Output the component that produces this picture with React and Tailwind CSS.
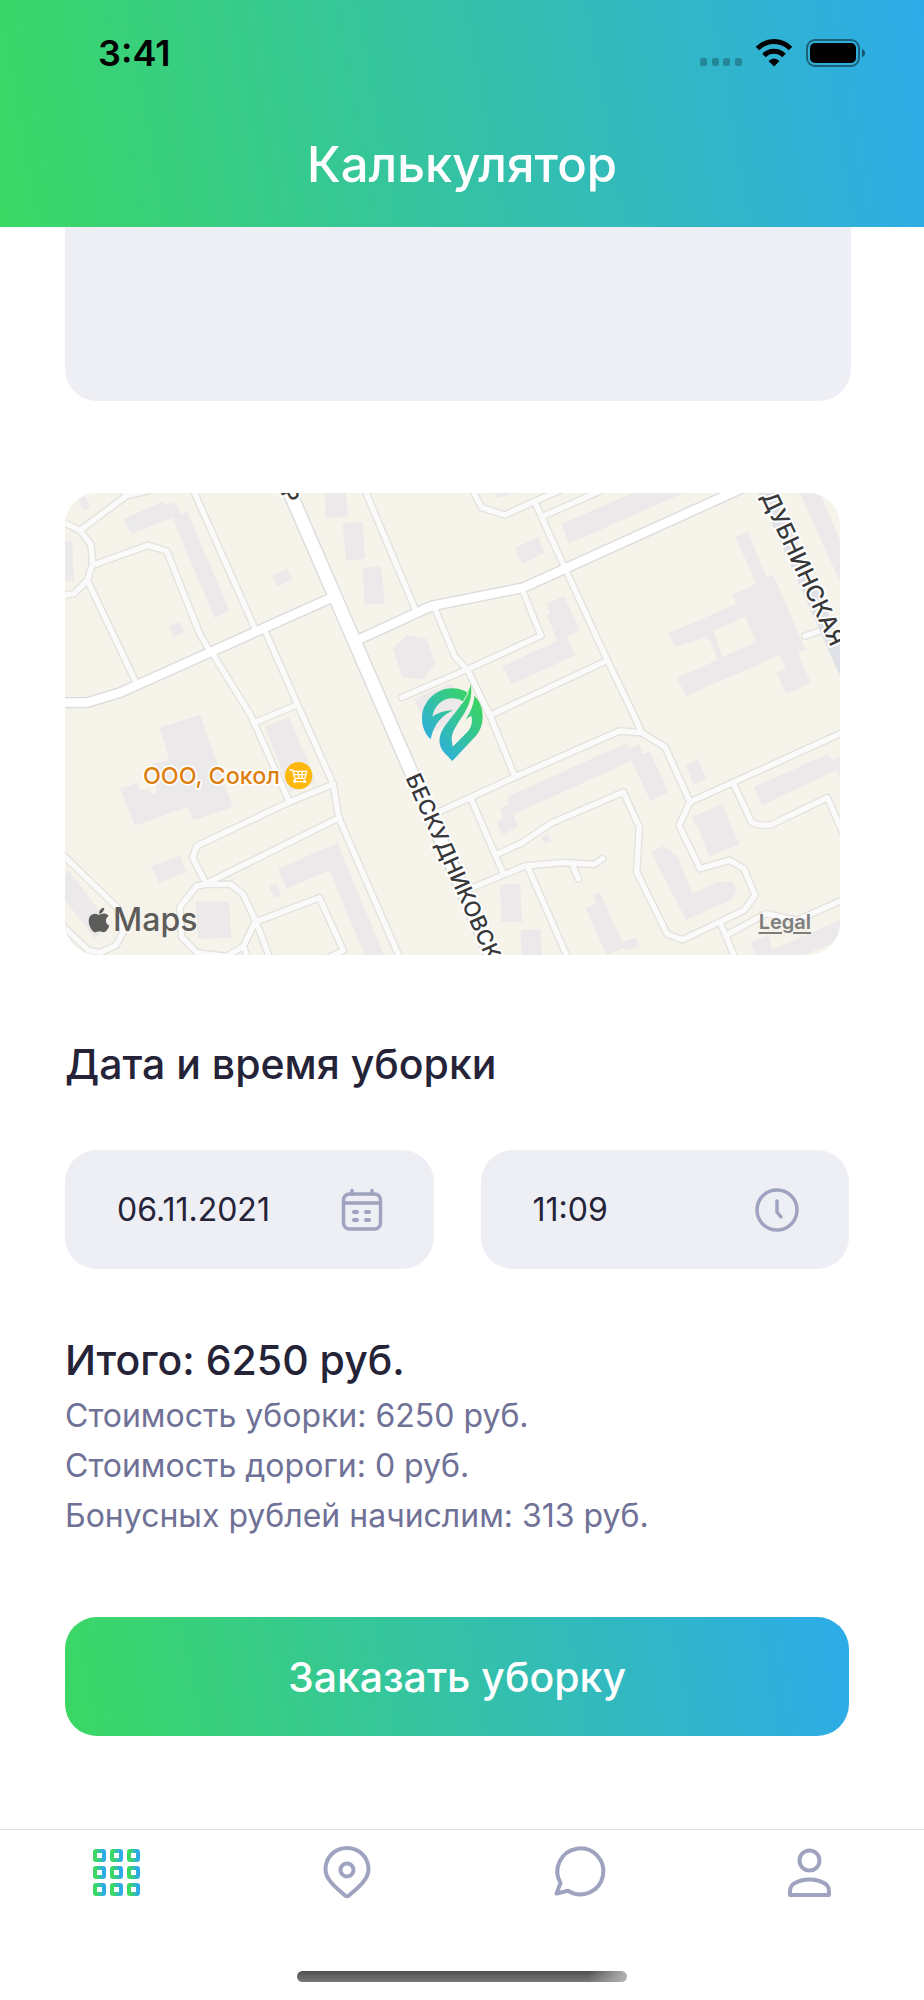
import React from "react";
import { FaApple } from "react-icons/fa";

const FONT = "font-['Inter','Liberation_Sans',sans-serif]";

const BUILDINGS = [
  "15,182 37,181 41,302 15,302",
  "55,55 75,45 91,84 70,91",
  "191,115 308,65 315,75 343,65 362,102 381,93 508,390 464,413 337,112 214,162",
  "637,287 682,264 697,296 652,319",
  "325,436 360,425 374,457 342,469",
  "794,38 858,38 864,107 798,113",
  "848,130 908,125 914,235 858,241",
  "908,264 963,258 975,368 914,375",
  "998,503 1043,464 1100,476 1126,550 1086,598 1026,590",
  "1062,655 1175,608 1220,700 1110,760",
  "1303,38 1365,38 1310,52",
  "1365,203 1435,170 1453,217 1387,252",
  "1505,130 1720,38 1870,38 1527,190",
  "1460,370 1512,348 1558,450 1520,470 1547,524 1355,612 1327,558 1492,482 1460,403 1470,397",
  "2220,38 2280,38 2340,180 2340,305",
  "300,742 420,703 518,980 400,1020 382,980 225,1036 181,925 230,908 240,930 268,925 275,942 290,938 280,850 328,840",
  "615,740 688,710 768,905 690,935",
  "275,1158 360,1126 380,1175 297,1209",
  "655,1165 832,1088 972,1425 915,1425 808,1170 680,1225",
  "625,1215 648,1208 663,1245 642,1252",
  "408,1263 508,1265 513,1372 414,1375",
  "15,1180 25,1170 150,1335 105,1375 15,1260",
  "1320,983 1345,975 1345,948 1700,788 1708,803 1738,792 1748,822 1770,816 1825,935 1772,963 1715,842 1360,1002 1374,1040 1327,1064 1310,1025 1330,1015",
  "1445,1070 1465,1060 1475,1085 1455,1092",
  "1878,853 1915,837 1938,895 1900,914",
  "1895,1010 1988,970 2037,1092 1948,1129 1913,1038 1906,1035",
  "2082,920 2305,820 2315,840 2340,830 2340,895 2328,870 2105,975",
  "1772,1115 1810,1098 1850,1125 1898,1240 1975,1204 2017,1204 2031,1230 2015,1258 1878,1318",
  "1320,1215 1380,1209 1386,1325 1325,1325",
  "1382,1348 1442,1347 1446,1425 1385,1425",
  "1577,1283 1608,1270 1600,1243 1620,1238 1687,1385 1728,1372 1737,1398 1698,1413 1690,1402 1640,1425",
  "2073,1387 2125,1365 2137,1408 2340,1318 2340,1380 2230,1425 2088,1425",
];

const MINOR = [
  "M15,128 L60,150 L200,46 L262,32 M200,46 L188,20",
  "M60,150 L93,193 L98,250 L82,300 L42,340 L15,344",
  "M98,255 L265,195 L320,212 L418,458 L445,505",
  "M82,300 L225,600",
  "M400,30 L585,445",
  "M455,515 L575,710 L688,965",
  "M612,445 L725,700 L820,912 L836,1012 L1018,1430",
  "M580,728 L712,673",
  "M915,30 L1065,385",
  "M1125,385 L1185,530 L1222,567 L1292,710 L1365,890",
  "M1025,651 L1222,567 L1443,466 L1390,335",
  "M1238,30 L1265,82 L1335,104 L1423,63 L1500,30",
  "M1423,63 L1642,540 L1715,690 L1745,757",
  "M1455,105 L1620,32",
  "M1642,540 L1290,705",
  "M2235,467 L2290,448",
  "M820,912 L688,965 L410,1097 L398,1132 L438,1210 L838,1012",
  "M438,1212 L512,1212 L548,1240 L587,1322 L550,1398 L500,1428 L412,1418 L365,1370 L360,1280 L410,1217 Z",
  "M587,1322 L628,1430 M550,1398 L562,1430",
  "M587,1325 L778,1252 L850,1410 L810,1430",
  "M10,1125 L170,1280 L190,1355 L168,1395 L120,1417 L85,1410 L10,1338",
  "M1125,1000 L1365,890 L1678,752 L1745,757 L1815,800 L1890,965 L1857,1035 L1920,1165 L2008,1140 L2052,1165 L2085,1245 L2052,1290 L1868,1378 L1822,1362 L1730,1175 L1738,1040 L1690,935 L1475,1028 L1385,1088 L1310,1122",
  "M1235,960 L1330,1180",
  "M1230,1225 L1395,1157 L1505,1147 L1603,1152 L1628,1135",
  "M1535,1147 L1555,1195",
  "M1402,1157 L1522,1430",
  "M1890,965 L2345,758",
  "M2020,908 L2075,1027 L2100,1034 L2132,1034 L2302,952 L2350,1060",
  "M1980,1325 L2024,1430",
  "M1998,1365 L2118,1300 L2210,1320 L2345,1260",
];

const MAJOR =
  "M10,667 L80,667 L180,637 L820,350 M890,480 L1115,377 L1390,322 L2050,22";
const MAIN = "M686,28 L1060,890 L1300,1440";

function MapView() {
  return (
    <section
      aria-label="Карта"
      className="relative mt-[92px] mr-[9px] overflow-hidden rounded-[32px] bg-[#f6f3ea]"
    >
      <svg viewBox="15 38 2325 1386" className="block w-full">
        <defs>
          <linearGradient id="pin" x1="0.15" y1="0.85" x2="0.8" y2="0.15">
            <stop offset="0" stopColor="#2dabe2" />
            <stop offset="0.2" stopColor="#2fb5cb" />
            <stop offset="1" stopColor="#39d465" />
          </linearGradient>
        </defs>
        <g fill="#ebe9ea">
          {BUILDINGS.map((points) => (
            <polygon key={points} points={points} />
          ))}
          <path
            fillRule="evenodd"
            d="M2027,170 L2063,153 L2120,290 L2140,283 L2237,510 L2215,515 L2230,560 L2254,607 L2177,641 L2150,577 L2177,563 L2160,525 L1878,646 L1850,593 L1973,538 L1950,476 L1940,480 L1935,470 L1845,502 L1827,458 L2028,372 L2017,343 L2088,310 Z M1960,453 L2057,408 L2088,485 L1988,530 Z"
          />
        </g>
        <g fill="none" strokeLinecap="round" strokeLinejoin="round">
          <g stroke="#e3e2dc" strokeWidth="24">
            {MINOR.map((d) => (
              <path key={d} d={d} />
            ))}
          </g>
          <path d={MAJOR} stroke="#dadbdb" strokeWidth="34" />
          <path d={MAIN} stroke="#dadbdb" strokeWidth="46" />
          <g stroke="#fafafa" strokeWidth="16">
            {MINOR.map((d) => (
              <path key={d} d={d} />
            ))}
          </g>
          <path d={MAJOR} stroke="#fff" strokeWidth="26" />
          <path d={MAIN} stroke="#fff" strokeWidth="38" />
          <path d="M2112,20 L2370,600" stroke="#dfe1e6" strokeWidth="44" />
        </g>
        <g
          fill="#38383a"
          stroke="#fff"
          strokeWidth="12"
          strokeLinejoin="round"
          paintOrder="stroke"
          fontWeight="500"
          fontSize="66"
        >
          <text transform="translate(661 34) rotate(65)">Р</text>
          <text transform="translate(1036 892) rotate(66)">БЕСКУДНИКОВСК</text>
          <text transform="translate(2102 48) rotate(65)" fontSize="70">
            ДУБНИНСКАЯ
          </text>
        </g>
        <text
          x="660"
          y="912"
          textAnchor="end"
          fontSize="70"
          fontWeight="500"
          fill="#df7f10"
          stroke="#fff"
          strokeWidth="10"
          strokeLinejoin="round"
          paintOrder="stroke"
        >
          ООО, Сокол
        </text>
        <circle cx="716" cy="886" r="41" fill="#ffb70a" />
        <g fill="none" stroke="#fff" strokeWidth="4" strokeLinecap="round" strokeLinejoin="round">
          <path d="M689,869 h9 l9,35 h31 M700,873 h40 l-5,21 h-30 M702,883 h35 M714,873 l3,21 M727,873 l-1,21" />
          <circle cx="704" cy="903" r="3" fill="#fff" />
          <circle cx="733" cy="903" r="3" fill="#fff" />
        </g>
        <g transform="translate(1020 570)">
          <path
            fill="url(#pin)"
            d="M92,207 C75,190 66,168 66,145 C66,95 107,54 157,54 C175,54 191,59 203,67 C207,60 210,52 212,42 C219,80 206,108 190,133 C172,162 154,184 155,208 L158,229 L199,188 C214,173 219,156 214,136 L197,147 C212,125 222,100 223,76 C240,92 249,115 248,143 C247,165 240,182 228,196 L157,272 L131,245 C112,222 116,193 134,168 C152,142 175,118 189,94 C180,87 169,84 157,84 C127,84 103,106 97,139 C113,127 135,121 160,120 C128,134 102,158 92,207 Z"
          />
          <path
            fill="none"
            stroke="#f6f3ea"
            strokeWidth="3"
            d="M205,66 C198,80 193,90 184,101"
          />
        </g>
      </svg>
      <div className="absolute bottom-[15px] left-[20px] flex items-center text-[#5c5c5a]">
        <FaApple className="size-[28px]" aria-hidden="true" />
        <span className="text-[32px] leading-[40px] font-medium">Maps</span>
      </div>
      <a
        href="#legal"
        className="absolute right-[29px] bottom-[21px] text-[20px] leading-[24px] font-semibold text-[#7d7d7b] underline decoration-2 underline-offset-3"
      >
        Legal
      </a>
    </section>
  );
}

function StatusIcons() {
  return (
    <svg viewBox="0 0 166 28" className="h-[28px] w-[166px]" aria-hidden="true">
      <g fillOpacity="0.25">
        <rect x="0" y="19" width="7" height="8" rx="2" />
        <rect x="12" y="19" width="7" height="8" rx="2" />
        <rect x="23" y="19" width="7" height="8" rx="2" />
        <rect x="35" y="19" width="7" height="8" rx="2" />
      </g>
      <g fill="none" stroke="#000" strokeWidth="5">
        <path d="M57.500,9.500 A23,23 0 0 1 90.500,9.500" />
        <path d="M64,16.500 A14,14 0 0 1 84,16.500" />
      </g>
      <path d="M68.500,22 Q74,17 79.500,22 L74,27.500 Z" />
      <rect x="107" y="1" width="52" height="26" rx="8" fill="none" stroke="#000" strokeOpacity="0.45" strokeWidth="2" />
      <rect x="110" y="4" width="46" height="20" rx="5" />
      <path d="M162,10 Q165,11 165,14 Q165,17 162,18 Z" fillOpacity="0.5" />
    </svg>
  );
}

function CalendarIcon() {
  return (
    <svg viewBox="0 0 44 44" className="size-[44px] shrink-0" fill="none" stroke="#9fa3c0" strokeWidth="3.500" strokeLinecap="round" aria-hidden="true">
      <rect x="3.500" y="6" width="37" height="35" rx="6" />
      <path d="M4,15 H40 M12,2.500 V6 M32,2.500 V6" />
      <path d="M14,24 h3 M26,24 h3 M14,32 h3 M26,32 h3" strokeWidth="4" />
    </svg>
  );
}

function ClockIcon() {
  return (
    <svg viewBox="0 0 44 44" className="size-[44px] shrink-0" fill="none" stroke="#9fa3c0" strokeWidth="3.500" strokeLinecap="round" strokeLinejoin="round" aria-hidden="true">
      <circle cx="22" cy="22" r="20" />
      <path d="M22,13 V24 L26,29" />
    </svg>
  );
}

function Field({ id, label, value, icon }) {
  return (
    <div className="flex h-[119px] min-w-0 items-center rounded-[32px] bg-[#eeeff5] pr-[50px] pl-[52px]">
      <label htmlFor={id} className="sr-only">
        {label}
      </label>
      <input
        id={id}
        type="text"
        defaultValue={value}
        className="w-full min-w-0 flex-1 bg-transparent text-[32px] leading-[40px] text-[#252338] outline-none"
      />
      {icon}
    </div>
  );
}

function GridIcon() {
  return (
    <svg viewBox="0 0 52 52" className="size-[52px]" fill="none" strokeWidth="4" aria-hidden="true">
      <defs>
        <linearGradient id="cell" x1="0" y1="0.1" x2="1" y2="0">
          <stop offset="0.1" stopColor="#3bd864" />
          <stop offset="0.9" stopColor="#2dabe9" />
        </linearGradient>
      </defs>
      {[5, 22, 39].map((y) =>
        [5, 22, 39].map((x) => (
          <rect key={`${x}-${y}`} x={x} y={y} width="9" height="9" rx="1" stroke="url(#cell)" />
        ))
      )}
    </svg>
  );
}

const iconProps = {
  viewBox: "0 0 52 52",
  className: "size-[52px] overflow-visible",
  fill: "none",
  stroke: "#9fa3c0",
  strokeWidth: 4,
  strokeLinejoin: "round",
  "aria-hidden": true,
};

const TABS = [
  { label: "Калькулятор", icon: <GridIcon /> },
  {
    label: "Адреса",
    icon: (
      <svg {...iconProps}>
        <path d="M26,2 C13.500,2 4.500,11.500 4.500,23.500 C4.500,33 14,41 24,49.500 Q26,51 28,49.500 C38,41 47.500,33 47.500,23.500 C47.500,11.500 38.500,2 26,2 Z" />
        <circle cx="26" cy="24" r="6.500" />
      </svg>
    ),
  },
  {
    label: "Чат",
    icon: (
      <svg {...iconProps}>
        <path d="M8.500,37 A23,23 0 1 1 16,44.800 L4.500,47.500 Z" />
      </svg>
    ),
  },
  {
    label: "Профиль",
    icon: (
      <svg {...iconProps}>
        <circle cx="26.500" cy="14.500" r="10" />
        <path d="M7,49 C7,44 6.500,40.500 11,37.500 C20,32 33,32 42,37.500 C46.500,40.500 46,44 46,49 Z" />
      </svg>
    ),
  },
];

export default function App() {
  return (
    <div className={`flex min-h-screen flex-col bg-white text-[#252338] ${FONT}`}>
      <header className="bg-[linear-gradient(80deg,#3bd864,#2dabe9)] pb-[32px]">
        <div className="flex items-center justify-between pt-[30px] pr-[58px] pl-[98px]">
          <time className="text-[36px] leading-[46px] font-semibold text-black">3:41</time>
          <StatusIcons />
        </div>
        <h1 className="mt-[59px] text-center text-[49px] leading-[60px] font-medium text-white">
          Калькулятор
        </h1>
      </header>

      <main className="flex flex-col pr-[75px] pl-[65px]">
        <textarea
          aria-label="Комментарий"
          className="-mr-[2px] h-[174px] resize-none rounded-b-[32px] bg-[#eeeff5] px-[52px] text-[32px] outline-none"
        />

        <MapView />

        <h2 className="mt-[85px] text-[41px] leading-[48px] font-medium">Дата и время уборки</h2>
        <div className="mt-[62px] grid grid-cols-2 gap-[47px]">
          <Field id="date" label="Дата" value="06.11.2021" icon={<CalendarIcon />} />
          <Field id="time" label="Время" value="11:09" icon={<ClockIcon />} />
        </div>

        <h2 className="mt-[67px] text-[41px] leading-[48px] font-medium">Итого: 6250 руб.</h2>
        <div className="mt-[7px] text-[32px] leading-[50px] text-[#6f7196]">
          <p>Стоимость уборки: 6250 руб.</p>
          <p>Стоимость дороги: 0 руб.</p>
          <p>Бонусных рублей начислим: 313 руб.</p>
        </div>

        <button
          type="button"
          className="mt-[76px] h-[119px] rounded-[32px] bg-[linear-gradient(80deg,#3bd864,#2dabe9)] text-[41px] leading-[48px] font-medium text-white"
        >
          Заказать уборку
        </button>
      </main>

      <footer className="mt-[93px] border-t border-[#dfdfe0]">
        <nav className="grid grid-cols-4 pt-[16px]">
          {TABS.map((tab) => (
            <button key={tab.label} type="button" aria-label={tab.label} className="flex justify-center">
              {tab.icon}
            </button>
          ))}
        </nav>
        <div className="mx-auto mt-[73px] mb-[17px] h-[11px] w-[330px] rounded-full bg-[linear-gradient(100deg,transparent_88%,#b5b5b5),linear-gradient(180deg,#505050,#787878)]" />
      </footer>
    </div>
  );
}
